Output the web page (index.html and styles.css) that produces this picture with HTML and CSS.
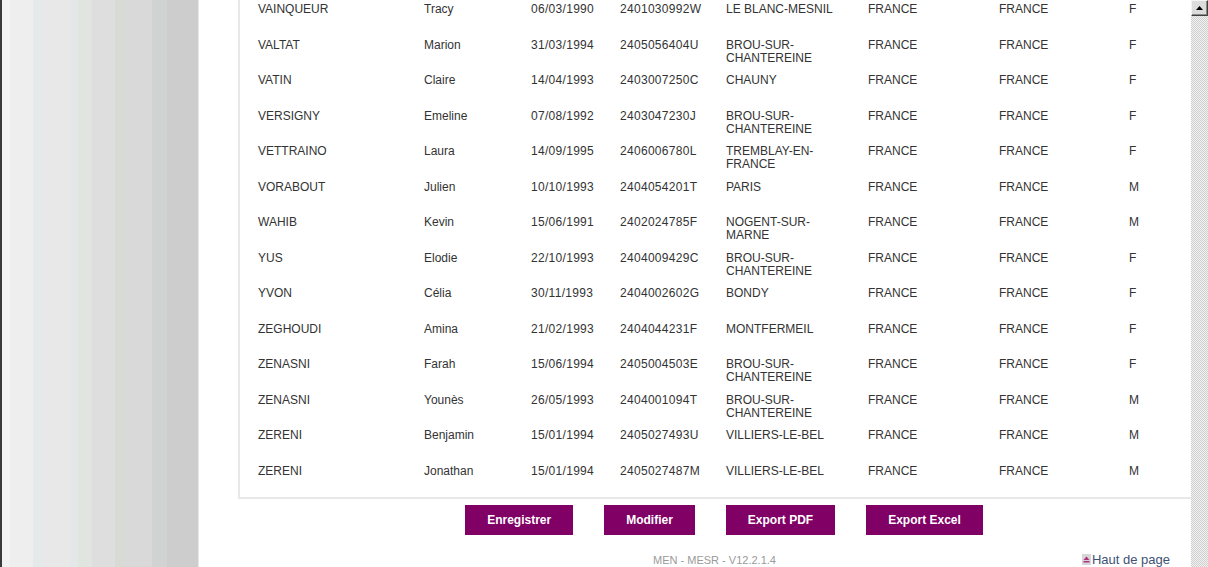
FILE: index.html
```html
<!DOCTYPE html>
<html lang="fr">
<head>
<meta charset="utf-8">
<title>Liste des élèves</title>
<link rel="stylesheet" href="styles.css">
</head>
<body>
<div class="page">
  <aside class="side"></aside>
  <main class="main">
    <div class="listbox">
      <div class="row"><span>VAINQUEUR</span><span>Tracy</span><span class="num">06/03/1990</span><span class="num">2401030992W</span><span class="city">LE BLANC-MESNIL</span><span>FRANCE</span><span>FRANCE</span><span>F</span></div>
      <div class="row"><span>VALTAT</span><span>Marion</span><span class="num">31/03/1994</span><span class="num">2405056404U</span><span class="city">BROU-SUR-CHANTEREINE</span><span>FRANCE</span><span>FRANCE</span><span>F</span></div>
      <div class="row"><span>VATIN</span><span>Claire</span><span class="num">14/04/1993</span><span class="num">2403007250C</span><span class="city">CHAUNY</span><span>FRANCE</span><span>FRANCE</span><span>F</span></div>
      <div class="row"><span>VERSIGNY</span><span>Emeline</span><span class="num">07/08/1992</span><span class="num">2403047230J</span><span class="city">BROU-SUR-CHANTEREINE</span><span>FRANCE</span><span>FRANCE</span><span>F</span></div>
      <div class="row"><span>VETTRAINO</span><span>Laura</span><span class="num">14/09/1995</span><span class="num">2406006780L</span><span class="city">TREMBLAY-EN-FRANCE</span><span>FRANCE</span><span>FRANCE</span><span>F</span></div>
      <div class="row"><span>VORABOUT</span><span>Julien</span><span class="num">10/10/1993</span><span class="num">2404054201T</span><span class="city">PARIS</span><span>FRANCE</span><span>FRANCE</span><span>M</span></div>
      <div class="row"><span>WAHIB</span><span>Kevin</span><span class="num">15/06/1991</span><span class="num">2402024785F</span><span class="city">NOGENT-SUR-MARNE</span><span>FRANCE</span><span>FRANCE</span><span>M</span></div>
      <div class="row"><span>YUS</span><span>Elodie</span><span class="num">22/10/1993</span><span class="num">2404009429C</span><span class="city">BROU-SUR-CHANTEREINE</span><span>FRANCE</span><span>FRANCE</span><span>F</span></div>
      <div class="row"><span>YVON</span><span>Célia</span><span class="num">30/11/1993</span><span class="num">2404002602G</span><span class="city">BONDY</span><span>FRANCE</span><span>FRANCE</span><span>F</span></div>
      <div class="row"><span>ZEGHOUDI</span><span>Amina</span><span class="num">21/02/1993</span><span class="num">2404044231F</span><span class="city">MONTFERMEIL</span><span>FRANCE</span><span>FRANCE</span><span>F</span></div>
      <div class="row"><span>ZENASNI</span><span>Farah</span><span class="num">15/06/1994</span><span class="num">2405004503E</span><span class="city">BROU-SUR-CHANTEREINE</span><span>FRANCE</span><span>FRANCE</span><span>F</span></div>
      <div class="row"><span>ZENASNI</span><span>Younès</span><span class="num">26/05/1993</span><span class="num">2404001094T</span><span class="city">BROU-SUR-CHANTEREINE</span><span>FRANCE</span><span>FRANCE</span><span>M</span></div>
      <div class="row"><span>ZERENI</span><span>Benjamin</span><span class="num">15/01/1994</span><span class="num">2405027493U</span><span class="city">VILLIERS-LE-BEL</span><span>FRANCE</span><span>FRANCE</span><span>M</span></div>
      <div class="row"><span>ZERENI</span><span>Jonathan</span><span class="num">15/01/1994</span><span class="num">2405027487M</span><span class="city">VILLIERS-LE-BEL</span><span>FRANCE</span><span>FRANCE</span><span>M</span></div>
    </div>
    <div class="actions">
      <button class="btn" type="button">Enregistrer</button>
      <button class="btn" type="button">Modifier</button>
      <button class="btn" type="button">Export PDF</button>
      <button class="btn" type="button">Export Excel</button>
    </div>
    <footer class="foot">
      <span class="version">MEN - MESR - V12.2.1.4</span>
      <a class="top-link" href="#"><span class="top-icon"><svg width="7" height="7" viewBox="0 0 7 7"><path d="M3.5 0.5 L6.5 4 L0.5 4 Z" fill="#b0307f"/><rect x="0.5" y="5" width="6" height="1.5" fill="#b0307f"/></svg></span>Haut de page</a>
    </footer>
  </main>
  <div class="scrollbar">
    <div class="sb-btn"><svg width="7" height="4" viewBox="0 0 7 4"><path d="M3.5 0 L7 4 L0 4 Z" fill="#000"/></svg></div>
    <div class="sb-track"></div>
  </div>
</div>
</body>
</html>
```

FILE: styles.css
```css
html, body {
  margin: 0;
  padding: 0;
  height: 100%;
  overflow: hidden;
  background: #fff;
}

body {
  font-family: "Liberation Sans", Arial, sans-serif;
  font-size: 12px;
  color: #333;
}

.page {
  display: flex;
  height: 567px;
}

.side {
  flex: 0 0 197px;
  border-left: 2px solid #3a3a3a;
  background: linear-gradient(to right,
    #f2f2f2 0px, #f2f2f2 8px,
    #eeeeee 8px, #eeeeee 31px,
    #e6e9e9 31px, #e6e9e9 41px,
    #e8e8e8 41px, #e8e8e8 68px,
    #e3e7e7 68px, #e3e7e7 76px,
    #e0e5df 76px, #e0e5df 90px,
    #dedede 90px, #dedede 113px,
    #d8dbd5 113px, #d8dbd5 123px,
    #d9d9d9 123px, #d9d9d9 150px,
    #d0d3d2 150px, #d0d3d2 165px,
    #cdcdcd 165px, #cdcdcd 196px,
    #e6e6e6 196px);
}

.main {
  flex: 1 1 auto;
  min-width: 0;
  padding-left: 39px;
  display: flex;
  flex-direction: column;
}

.listbox {
  border-left: 2px solid #e8e8e8;
  border-bottom: 2px solid #e8e8e8;
  padding-left: 18px;
}

.row {
  display: grid;
  grid-template-columns: 166px 107px 89px 106px 142px 131px 130px 1fr;
  height: 35.5px;
  box-sizing: border-box;
  padding-top: 3px;
  line-height: 13px;
}

.row .num {
  letter-spacing: 0.3px;
}

.row .city {
  padding-right: 16px;
}

.actions {
  display: flex;
  justify-content: center;
  gap: 31px;
  margin-top: 6px;
  padding-left: 19px;
}

.btn {
  height: 30px;
  padding: 0 22px;
  border: 0;
  background: #800066;
  color: #fff;
  font-family: "Liberation Sans", Arial, sans-serif;
  font-size: 12px;
  font-weight: bold;
  cursor: pointer;
}

.foot {
  display: grid;
  grid-template-columns: 1fr auto 1fr;
  align-items: center;
  margin-top: 17px;
  height: 14px;
}

.version {
  grid-column: 2;
  font-size: 11px;
  color: #9a9a9a;
}

.top-link {
  grid-column: 3;
  justify-self: end;
  margin-right: 21px;
  display: flex;
  align-items: center;
  color: #3d5275;
  text-decoration: none;
  font-size: 13px;
}

.top-icon {
  display: inline-flex;
  align-items: center;
  justify-content: center;
  width: 9px;
  height: 11px;
  background: #d6d6d6;
  margin-right: 1px;
}

.scrollbar {
  flex: 0 0 17px;
  display: flex;
  flex-direction: column;
}

.sb-btn {
  flex: 0 0 16px;
  box-sizing: border-box;
  border-top: 1px solid #f4f4f4;
  border-left: 1px solid #f4f4f4;
  border-right: 1px solid #404040;
  border-bottom: 1px solid #404040;
  box-shadow: inset -1px -1px 0 #8a8a8a;
  background: #dcdcdc;
  display: flex;
  align-items: center;
  justify-content: center;
}

.sb-track {
  flex: 1 1 auto;
  background-color: #f2f2f2;
  background-image:
    linear-gradient(45deg, #cfcfcf 25%, transparent 25%, transparent 75%, #cfcfcf 75%),
    linear-gradient(45deg, #cfcfcf 25%, transparent 25%, transparent 75%, #cfcfcf 75%);
  background-size: 2px 2px;
  background-position: 0 0, 1px 1px;
}
```
